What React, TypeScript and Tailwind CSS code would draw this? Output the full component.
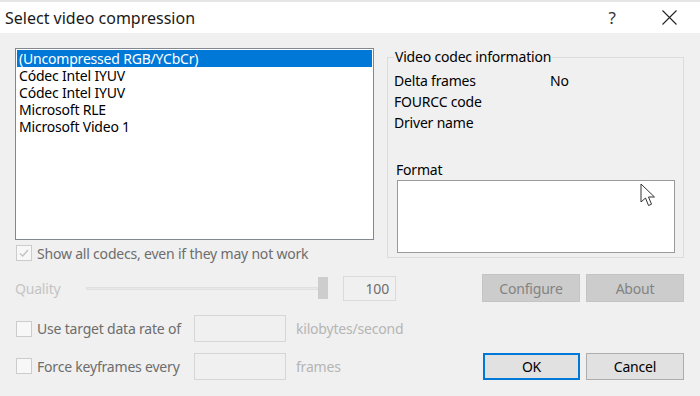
import React from 'react';

const font = { fontFamily: '"Noto Sans", "Open Sans", sans-serif' };

const codecs = [
  '(Uncompressed RGB/YCbCr)',
  'Códec Intel IYUV',
  'Códec Intel IYUV',
  'Microsoft RLE',
  'Microsoft Video 1',
];

const CheckBox: React.FC<{ checked?: boolean }> = ({ checked }) => (
  <span className="flex h-4 w-4 shrink-0 items-center justify-center border border-[#cccccc] bg-[#f7f7f7]">
    {checked && (
      <svg width="12" height="12" viewBox="0 0 12 12" fill="none">
        <path d="M2 6.5 L4.7 9 L10 3" stroke="#c2c2c2" strokeWidth="1.4" />
      </svg>
    )}
  </span>
);

const App: React.FC = () => {
  return (
    <div className="relative h-[396px] w-[700px] overflow-hidden bg-[#f0f0f0] text-[14px] tracking-[-0.2px] text-black" style={font}>
      {/* Title bar */}
      <div className="flex h-[33px] items-center border-t-2 border-[#e6e6e6] bg-white tracking-normal">
        <span className="ml-[5px] text-[16px] text-[#1a1a1a]">Select video compression</span>
        <span className="ml-auto mr-[46px] text-[17px] text-[#333]">?</span>
        <svg className="mr-[23px]" width="15" height="15" viewBox="0 0 15 15">
          <path d="M0.5 0.5 L14.5 14.5 M14.5 0.5 L0.5 14.5" stroke="#222" strokeWidth="1.1" />
        </svg>
      </div>

      <div className="px-[15px] pt-[15px]">
        {/* Top: list + codec info */}
        <div className="grid grid-cols-[359px_297px] gap-x-[13px]">
          <div>
            <div className="h-[192px] border border-[#828790] bg-white p-[1px]">
              {codecs.map((c, i) => (
                <div
                  key={i}
                  className={`h-[17px] pl-[2px] leading-[17px] ${i === 0 ? 'bg-[#0078d7] text-white' : ''}`}
                >
                  {c}
                </div>
              ))}
            </div>
            <div className="mt-[5px] flex h-4 items-center gap-[5px] pl-[1px]">
              <CheckBox checked />
              <span className="text-[#6d6d6d]">Show all codecs, even if they may not work</span>
            </div>
          </div>

          <fieldset className="h-[210px] border border-[#dcdcdc] pl-[6px] pr-[8px]">
            <legend className="px-[1px] leading-[18px]">Video codec information</legend>
            <div className="mt-[4px] flex flex-col">
              <div className="flex h-[21px] items-center">
                <span className="w-[156px]">Delta frames</span>
                <span>No</span>
              </div>
              <div className="flex h-[21px] items-center">FOURCC code</div>
              <div className="flex h-[21px] items-center">Driver name</div>
            </div>
            <div className="mt-[28px] pl-[2px] leading-[18px]">Format</div>
            <div className="ml-[3px] mt-[1px] h-[73px] border border-[#9a9a9a] bg-white" />
          </fieldset>
        </div>

        {/* Quality row */}
        <div className="mt-[13px] flex h-[28px] items-center">
          <span className="w-[71px] text-[#c4c4c4]">Quality</span>
          <div className="flex h-[22px] w-[242px] items-center">
            <div className="h-[3px] flex-1 border border-[#e0e0e0] bg-[#e8e8e8]" />
            <div className="h-[22px] w-[10px] bg-[#cdcdcd]" />
          </div>
          <div className="ml-[15px] flex h-[25px] w-[53px] items-center justify-end border border-[#dadada] pr-[6px] text-[#6d6d6d]">
            100
          </div>
          <button className="ml-[86px] h-[28px] w-[98px] border border-[#c4c4c4] bg-[#cccccc] text-[#838383]">Configure</button>
          <button className="ml-[6px] h-[28px] w-[98px] border border-[#c4c4c4] bg-[#cccccc] text-[#838383]">About</button>
        </div>

        {/* Data rate */}
        <div className="mt-[13px] flex h-[27px] items-center">
          <div className="flex w-[179px] items-center gap-[5px] pl-[1px]">
            <CheckBox />
            <span className="text-[#6d6d6d]">Use target data rate of</span>
          </div>
          <div className="h-[27px] w-[92px] border border-[#d6d6d6]" />
          <span className="ml-[10px] text-[#b5b5b5]">kilobytes/second</span>
        </div>

        {/* Keyframes + OK/Cancel */}
        <div className="mt-[10px] flex h-[28px] items-center">
          <div className="flex w-[179px] items-center gap-[5px] pl-[1px]">
            <CheckBox />
            <span className="text-[#6d6d6d]">Force keyframes every</span>
          </div>
          <div className="h-[27px] w-[92px] border border-[#d6d6d6]" />
          <span className="ml-[10px] w-[187px] text-[#b5b5b5]">frames</span>
          <button className="h-[27px] w-[97px] border-2 border-[#0078d7] bg-[#e1e1e1]">OK</button>
          <button className="ml-[6px] h-[27px] w-[98px] border border-[#adadad] bg-[#e1e1e1]">Cancel</button>
        </div>
      </div>

      {/* Mouse pointer */}
      <svg className="absolute left-[640px] top-[183px]" width="18" height="26" viewBox="0 0 18 26">
        <path d="M1 1 L1 19 L5.5 15 L8.5 22.5 L11.5 21.2 L8.5 14 L14.5 14 Z" fill="#fff" stroke="#333" strokeWidth="1" strokeLinejoin="round" />
      </svg>
    </div>
  );
};

export default App;
